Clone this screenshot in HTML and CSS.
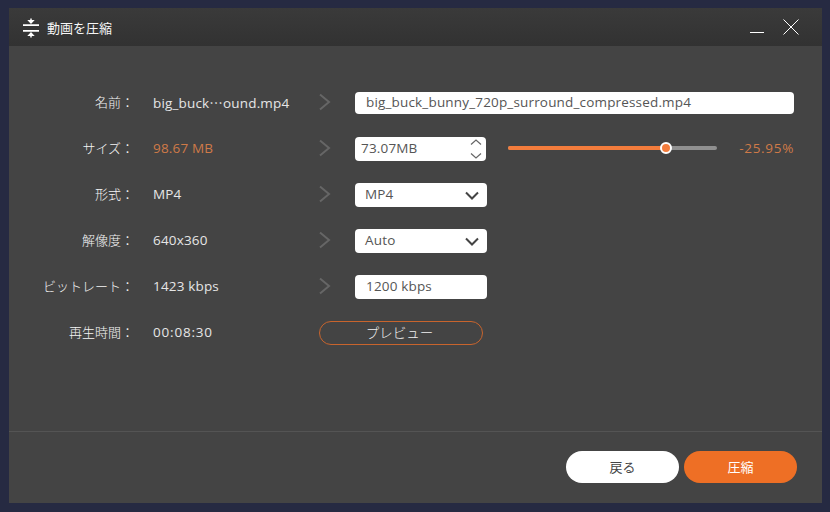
FILE: index.html
```html
<!DOCTYPE html>
<html lang="ja">
<head>
<meta charset="utf-8">
<title>動画を圧縮</title>
<link rel="stylesheet" href="styles.css">
</head>
<body>
<main class="window">
  <header class="titlebar">
    <svg class="title-icon" width="16" height="20" viewBox="0 0 16 20"><path d="M8 0.500v4M6 2.800L8 5l2-2.200z M8 19.500v-4M6 17.200L8 15l2 2.200z" fill="#fff" stroke="#fff" stroke-width="1.500"/><path d="M0 7.200h16M0 12.800h16" stroke="#fff" stroke-width="1.800"/></svg>
    <span class="title-text">動画を圧縮</span>
    <span class="spacer"></span>
    <svg class="win-min" width="14" height="14" viewBox="0 0 14 14"><path d="M0 12.500h14" stroke="#fff" stroke-width="1"/></svg>
    <svg class="win-close" width="16" height="16" viewBox="0 0 16 16"><path d="M0.500 0.500l15 15M15.500 0.500l-15 15" stroke="#fff" stroke-width="1"/></svg>
  </header>
  <section class="form">
    <div class="row">
      <span class="label">名前：</span><span class="value">big_buck⋯ound.mp4</span>
      <svg class="chev" width="36" height="18" viewBox="0 0 36 18"><path d="M1 1.500l9 7.500-9 7.500" fill="none" stroke="#666" stroke-width="2"/></svg>
      <div class="field field-wide">big_buck_bunny_720p_surround_compressed.mp4</div>
    </div>
    <div class="row">
      <span class="label">サイズ：</span><span class="value accent">98.67 MB</span>
      <svg class="chev" width="36" height="18" viewBox="0 0 36 18"><path d="M1 1.500l9 7.500-9 7.500" fill="none" stroke="#666" stroke-width="2"/></svg>
      <div class="field field-spin">
        <span>73.07MB</span>
        <svg class="spin-arrows" width="14" height="20" viewBox="0 0 14 20"><path d="M2 5.500L7 1l5 4.500M2 14.500l5 4.500 5-4.500" fill="none" stroke="#666" stroke-width="1.200"/></svg>
      </div>
      <div class="slider"><div class="slider-fill"></div><div class="slider-thumb"></div></div>
      <span class="percent">-25.95%</span>
    </div>
    <div class="row">
      <span class="label">形式：</span><span class="value">MP4</span>
      <svg class="chev" width="36" height="18" viewBox="0 0 36 18"><path d="M1 1.500l9 7.500-9 7.500" fill="none" stroke="#666" stroke-width="2"/></svg>
      <div class="field field-select"><span>MP4</span><svg class="caret" width="14" height="9" viewBox="0 0 14 9"><path d="M1 1.500l6 6 6-6" fill="none" stroke="#444" stroke-width="2"/></svg></div>
    </div>
    <div class="row">
      <span class="label">解像度：</span><span class="value">640x360</span>
      <svg class="chev" width="36" height="18" viewBox="0 0 36 18"><path d="M1 1.500l9 7.500-9 7.500" fill="none" stroke="#666" stroke-width="2"/></svg>
      <div class="field field-select"><span>Auto</span><svg class="caret" width="14" height="9" viewBox="0 0 14 9"><path d="M1 1.500l6 6 6-6" fill="none" stroke="#444" stroke-width="2"/></svg></div>
    </div>
    <div class="row">
      <span class="label">ビットレート：</span><span class="value">1423 kbps</span>
      <svg class="chev" width="36" height="18" viewBox="0 0 36 18"><path d="M1 1.500l9 7.500-9 7.500" fill="none" stroke="#666" stroke-width="2"/></svg>
      <div class="field field-plain">1200 kbps</div>
    </div>
    <div class="row">
      <span class="label">再生時間：</span><span class="value value-time">00:08:30</span>
      <button class="preview">プレビュー</button>
    </div>
  </section>
  <footer class="footer">
    <button class="btn btn-back">戻る</button>
    <button class="btn btn-go">圧縮</button>
  </footer>
</main>
</body>
</html>
```

FILE: styles.css
```css
* { box-sizing: border-box; }
html, body { margin: 0; height: 100%; }
body {
  width: 830px;
  height: 512px;
  overflow: hidden;
  background: #262a42;
  padding: 8px 8px 9px 9px;
  font-family: "Open Sans", "Noto Sans CJK JP", sans-serif;
  font-size: 13.500px;
  letter-spacing: 0.170px;
  color: #e6e6e6;
}
.window {
  width: 813px;
  height: 495px;
  background: #444444;
  display: flex;
  flex-direction: column;
}
.titlebar {
  height: 38px;
  flex: none;
  background: linear-gradient(#3a3a3a, #323232);
  display: flex;
  align-items: center;
  padding: 0 23px 0 14px;
}
.title-icon { margin-right: 8px; margin-top: 2px; }
.title-text {
  color: #f5f5f5;
  font-size: 13px;
  letter-spacing: 0;
  font-family: "Noto Sans CJK JP", sans-serif;
}
.spacer { flex: 1; }
.win-close { margin-left: 19px; }
.form {
  flex: 1;
  padding-top: 33px;
  display: flex;
  flex-direction: column;
}
.row {
  height: 46px;
  flex: none;
  display: flex;
  align-items: center;
}
.label {
  width: 125px;
  padding-bottom: 2px;
  text-align: right;
  font-family: "Noto Sans CJK JP", sans-serif;
  font-size: 13px;
  font-weight: 300;
  letter-spacing: 0;
  color: #f4f4f4;
}
.value { width: 166px; margin-left: 19px; }
.value-time { letter-spacing: 0.800px; }
.accent { color: #cf7a48; }
.chev { flex: none; }
.field {
  background: #fff;
  border-radius: 4px;
  color: #555;
  display: flex;
  align-items: center;
  margin-top: 2px;
  padding-bottom: 3px;
}
.field-wide { width: 439px; height: 22px; padding-left: 11px; }
.field-spin { width: 131px; height: 24px; padding-left: 6px; padding-right: 3px; justify-content: space-between; }
.field-select { width: 132px; height: 24px; padding-left: 10px; padding-right: 8px; justify-content: space-between; }
.field-plain { width: 132px; height: 24px; padding-left: 11px; }
.spin-arrows { margin-top: 3px; }
.caret { margin-top: 3px; }
.slider {
  width: 209px;
  height: 4px;
  margin-left: 22px;
  background: #909090;
  border-radius: 2px;
  position: relative;
}
.slider-fill { width: 158px; height: 4px; background: #f37c3c; border-radius: 2px; }
.slider-thumb {
  position: absolute;
  left: 152px;
  top: -4px;
  width: 12px;
  height: 12px;
  border-radius: 50%;
  background: #f37c3c;
  border: 2px solid #fff;
}
.percent { margin-left: auto; margin-right: 28px; color: #cf7a48; letter-spacing: 0.700px; }
.preview {
  width: 164px;
  height: 24px;
  margin-top: 2px;
  background: transparent;
  border: 1.500px solid #c8642d;
  border-radius: 12px;
  color: #f0f0f0;
  font-family: "Noto Sans CJK JP", sans-serif;
  font-size: 13.500px;
  font-weight: 300;
  padding: 0 3px 2px 0;
}
.footer {
  height: 72px;
  flex: none;
  border-top: 1px solid #545454;
  display: flex;
  justify-content: flex-end;
  align-items: flex-start;
  gap: 5px;
  padding: 19px 25px 0 0;
}
.btn {
  width: 113px;
  height: 32px;
  border: none;
  border-radius: 16px;
  font-family: "Noto Sans CJK JP", sans-serif;
  font-size: 13px;
  padding: 0 0 2px;
}
.btn-back { background: #fff; color: #444; }
.btn-go { background: #ee6f25; color: #fff; }
```
